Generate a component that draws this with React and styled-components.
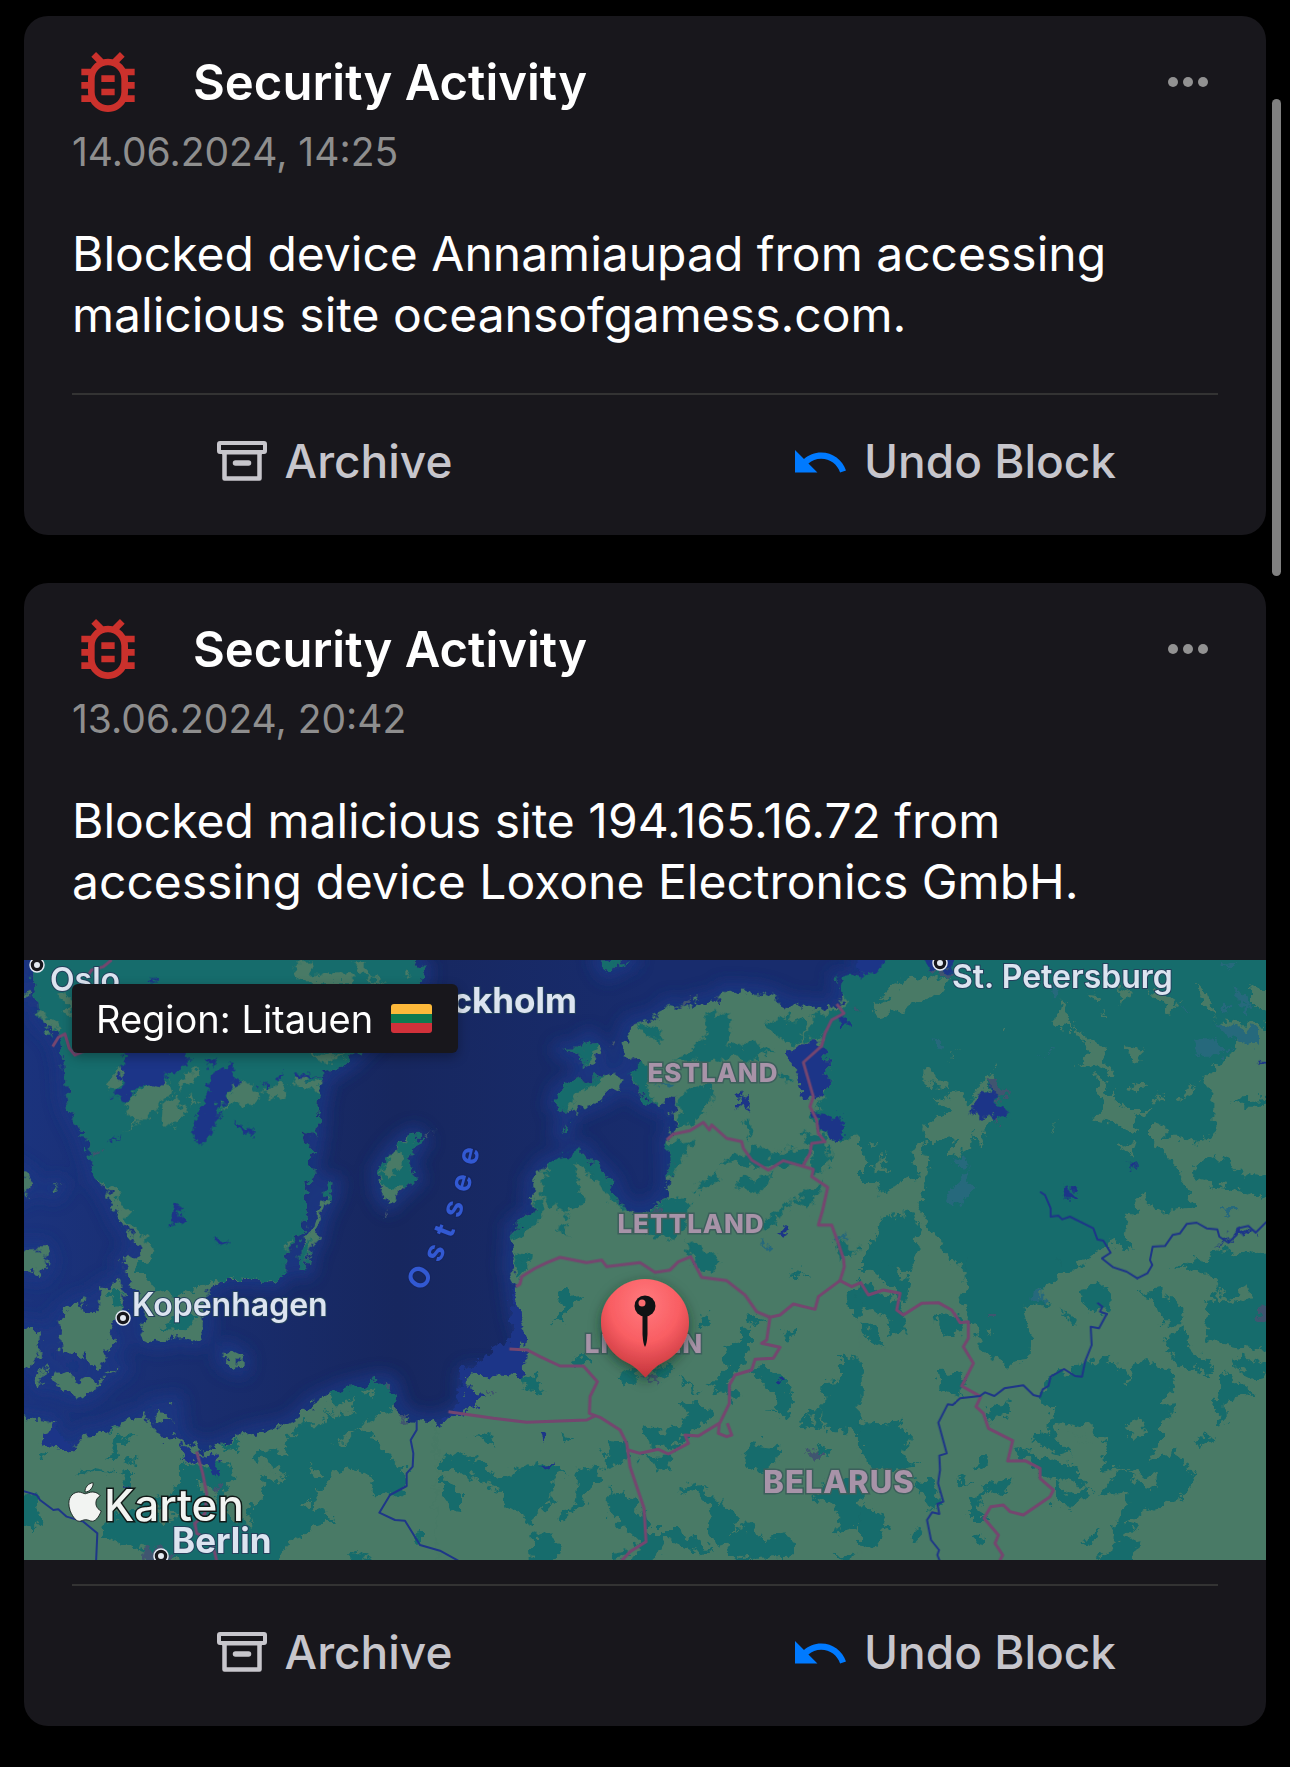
import React from 'react';
import styled, { createGlobalStyle } from 'styled-components';
import { FaApple } from 'react-icons/fa';

const GlobalStyle = createGlobalStyle`
  * {
    box-sizing: border-box;
  }

  body {
    margin: 0;
    background: #000000;
    color: #ffffff;
    font-family: Inter, 'Liberation Sans', sans-serif;
  }
`;

const Page = styled.main`
  position: relative;
  display: flex;
  flex-direction: column;
  gap: 48px;
  padding: 16px 24px 40px;
`;

const ScrollThumb = styled.div`
  position: absolute;
  top: 99px;
  right: 9px;
  width: 9px;
  height: 477px;
  border-radius: 5px;
  background: #808080;
`;

const Card = styled.article`
  padding: 36px 0 8px;
  border-radius: 24px;
  background: #18171c;
  overflow: hidden;
`;

const CardHeader = styled.header`
  display: flex;
  align-items: center;
  height: 60px;
  padding: 0 48px 0 57px;
`;

const Title = styled.h2`
  flex: 1;
  margin: 0 0 0 58px;
  font-size: 49px;
  font-weight: 600;
  line-height: 61px;
`;

const MoreButton = styled.button`
  display: flex;
  padding: 10px;
  border: none;
  background: none;
  cursor: pointer;
`;

const DateText = styled.time`
  display: block;
  margin: 16px 48px 0;
  color: #8e8e8e;
  font-size: 39px;
  line-height: 48px;
`;

const Message = styled.p`
  margin: 47px 48px 48px;
  font-size: 48px;
  line-height: 61px;
`;

const Actions = styled.footer`
  display: grid;
  grid-template-columns: 1fr 1fr;
  column-gap: 96px;
  place-items: center;
  height: 134px;
  margin: ${({ $spaced }) => ($spaced ? '24px' : '0')} 48px 0;
  border-top: 2px solid #333333;
`;

const ActionButton = styled.button`
  display: flex;
  align-items: center;
  gap: 18px;
  padding: 0;
  border: none;
  background: none;
  color: #c7c6cc;
  font-family: inherit;
  font-size: 46px;
  font-weight: 500;
  line-height: 60px;
  cursor: pointer;
`;

const MapWrapper = styled.div`
  position: relative;
  height: 600px;
  overflow: hidden;
`;

const MapSvg = styled.svg`
  display: block;
  width: 100%;
  height: 100%;
`;

const RegionTag = styled.div`
  position: absolute;
  top: 24px;
  left: 48px;
  display: flex;
  align-items: center;
  gap: 18px;
  height: 69px;
  padding: 0 26px 0 24px;
  border-radius: 6px;
  background: #18171c;
  box-shadow: 0 4px 12px rgba(0, 0, 0, 0.3);
  font-size: 38px;
  line-height: 48px;
`;

const Flag = styled.span`
  width: 41px;
  height: 29px;
  border-radius: 3px;
  background: linear-gradient(
    #fdb93a 0 33%,
    #0f7a50 33% 66%,
    #d0313a 66% 100%
  );
`;

const PlaceText = styled.text`
  fill: #dce4f0;
  stroke: #24405c;
  stroke-width: 2px;
  paint-order: stroke;
  font-size: ${({ $large }) => ($large ? '35px' : '32px')};
  font-weight: ${({ $large }) => ($large ? 700 : 600)};
`;

const CountryText = styled.text`
  fill: #a893a8;
  stroke: #3d5f5c;
  stroke-width: 3px;
  paint-order: stroke;
  font-size: ${({ $large }) => ($large ? '31px' : '26px')};
  font-weight: 800;
  letter-spacing: 1px;
`;

const SeaText = styled.text`
  fill: #3259d2;
  stroke: #16255e;
  stroke-width: 2px;
  paint-order: stroke;
  font-size: 29px;
  font-weight: 700;
  letter-spacing: 11px;
`;

const BrandText = styled.text`
  fill: #f2f4f2;
  stroke: #111a18;
  stroke-width: 3px;
  paint-order: stroke;
  font-size: 44px;
  font-weight: 500;
`;

// the map is split in six sheets, three units per pixel
const sheets = [
  {
    x: -12,
    y: -30,
    land: [
      '345,960 320,920 350,915 365,900 330,850 300,810 280,765 255,715 230,690 220,650 200,590 190,560 150,480 140,440 135,350 125,300 100,240 75,230 55,200 50,150 40,90 38,-20 1180,-20 1190,40 1210,60 1200,100 1120,200 1020,300 990,330 930,370 890,380 905,415 895,460 890,560 860,545 850,570 885,600 865,640 880,680 850,720 860,760 850,840 830,870 795,915 795,960',
      '-40,120 30,130 36,140 -40,145', '-40,640 28,680 28,720 -40,750', '-40,897 70,897 82,930 75,960 -40,960', '88,715 118,705 100,728',
      '1185,555 1205,575 1170,610 1170,660 1187,685 1150,715 1105,760 1085,730 1078,660 1120,600 1160,565',
      '920,705 940,700 930,745 900,800 885,870 865,910 858,960 845,960 842,890 870,830 890,790 915,745',
    ],
    forest: [
      '345,970 370,925 398,925 390,880 360,850 325,820 325,790 300,760 280,715 230,690 220,650 200,590 190,560 150,480 140,440 135,350 125,300 100,240 75,230 55,200 50,150 40,90 38,-20 1180,-20 1190,40 1210,60 1200,100 1120,200 1020,300 990,330 930,370 890,380 905,415 895,460 890,560 860,545 850,570 885,600 865,640 880,680 850,720 860,760 850,840 830,870 795,915 795,970',
      '1185,555 1205,575 1170,610 1170,660 1187,685 1150,715 1090,715 1078,660 1120,600',
      '920,705 940,700 930,745 915,745', '842,890 865,870 858,960 845,960',
    ],
    meadow: [
      '315,450 385,405 390,365 400,400 440,385 455,430 415,470 360,520 310,550 345,515 330,490',
      '255,415 295,350 318,380 290,420', '470,400 530,350 530,380 480,418', '600,470 650,400 680,390 725,430 700,465 640,460',
      '725,430 785,390 798,430 770,450', '810,400 840,375 905,400 900,420 850,415', '430,470 460,445 495,490 470,525 427,520',
      '500,430 530,435 510,470', '820,35 880,35 885,75 1000,70 1000,100 840,100', '990,40 1040,40 1040,80 1100,100 1050,95',
      '50,180 80,200 120,225 100,240 70,225', '105,130 155,120 155,195 130,160', '875,310 920,315 990,310 900,340',
      '1085,670 1130,590 1150,625 1120,685', '1145,70 1170,55 1165,80', '800,880 820,865 805,900',
    ],
    lake: [
      '320,300 515,300 500,345 450,370 420,405 390,400 350,415 320,445 272,440 310,410 300,350',
      '640,335 650,400 600,460 600,500 550,585 525,570 540,470 580,370', '455,800 475,765 488,775 475,830 452,825',
      '592,868 632,875 600,885', '640,515 700,540 700,560 660,535', '560,330 585,330 580,355', '765,375 795,370 785,390',
      '820,370 900,380 820,388', '720,410 750,405 735,425', '275,570 305,550 285,575', '388,70 412,105 395,100',
    ],
    marsh: [],
    town: ['215,610 240,602 225,625', '1210,560 1250,540 1215,570', '1088,800 1112,775 1100,798'],
    border: ['275,30 250,50 215,60 205,75', '98,290 115,262 135,252 148,295 165,315 200,300'],
    river: [],
  },
  {
    x: 1248,
    y: -30,
    land: [
      '570,225 650,205 690,165 740,180 775,155 840,155 850,125 960,130 1010,145 1030,165 1110,170 1185,178 1210,130 1195,85 1215,110 1245,100 1262,70 1262,960 215,960 220,830 275,790 280,690 320,640 370,630 430,600 440,625 510,690 530,750 575,790 620,785 680,745 690,700 685,570 700,540 700,490 715,455 690,440 655,468 600,440 575,380 600,340 560,320 555,270',
      '365,300 420,300 445,265 490,310 430,358 425,320', '345,465 360,420 420,390 500,375 530,370 545,400 500,440 440,465 390,487',
      '360,550 380,520 375,550', '480,32 570,32 500,65',
    ],
    forest: [
      '800,190 870,190 860,290 940,280 1000,300 940,330 880,320 800,340 700,330 770,290 800,240', '960,225 1010,200 1090,210 1095,265 1040,280 1000,250',
      '1110,190 1190,190 1140,270 1100,280', '575,370 600,340 640,350 620,400 625,440 655,468 600,440', '720,430 820,390 810,460 760,520 700,540 720,470',
      '1145,270 1180,200 1215,160 1195,85 1262,70 1262,550 1200,580 1140,540 1110,500 1165,430 1160,330',
      '320,640 430,600 440,625 510,690 530,750 575,790 500,740 440,660 405,640 415,700 435,755 380,795 305,740',
      '220,830 275,790 290,740 310,750 300,810 260,850 220,870', '355,830 385,815 380,865', '685,580 775,565 740,600 710,650 690,690',
      '620,790 690,740 750,760 750,800 700,870 610,850 580,820', '740,870 830,910 838,960 760,940', '760,720 830,665 825,695 780,730',
      '890,690 995,675 960,730 900,720', '840,640 900,615 960,590 1000,620 1040,590 1110,610 1080,645 980,655 880,640',
      '960,820 1090,730 1150,700 1100,790 1060,750 980,850', '1080,545 1160,560 1165,640 1120,680 1120,600', '905,520 935,510 930,570',
      '1185,880 1250,890 1240,930 1200,920', '225,910 270,915 260,960 220,950', '1020,380 1060,380 1040,405', '590,220 660,240 670,270 620,260',
      '365,300 420,300 445,265 470,290 430,358 425,320', '345,465 360,420 420,390 500,375 430,420 400,440 390,487', '360,550 380,520 375,550', '480,32 570,32 500,65',
    ],
    meadow: [],
    lake: [
      '1045,300 1075,282 1150,282 1160,330 1165,420 1120,450 1080,440 1070,370 1040,330', '1115,480 1190,495 1212,530 1210,568 1180,568 1130,520',
      '900,435 925,432 930,475 915,488 895,465', '1010,850 1038,828 1040,852', '1195,200 1220,200 1215,230',
    ],
    marsh: ['960,875 990,885 985,905', '1190,870 1220,845 1210,880', '650,400 700,395 690,415'],
    town: ['715,165 755,145 735,185', '510,280 540,270 525,290', '625,780 660,775 665,795', '1240,175 1262,180 1250,190'],
    border: [
      '680,570 700,552 750,542 790,517 808,540 815,525 860,565 905,575 910,595 935,630 985,660 1030,632 1085,648 1120,658 1115,680 1163,712 1148,780 1135,825 1175,825 1195,880 1210,925 1213,950 1200,992',
      '1190,162 1212,190 1175,210 1155,250 1145,288 1090,337 1120,440 1110,470 1130,510 1135,550 1155,575 1115,580 1110,610 1088,648',
      '228,1010 240,1002 245,980 285,955 320,938 360,922 440,938 485,930 500,950 600,938 645,967 690,960 715,935 752,920 785,982 860,992 915,1035 950,1085 990,1102',
    ],
    river: [],
  },
  {
    x: 2508,
    y: -30,
    land: ['0,-20 1290,-20 1290,960 0,960'],
    forest: ['0,-20 1290,-20 1290,960 0,960'],
    meadow: [
      '30,150 60,165 110,100 190,80 280,85 240,130 160,165 75,200 40,180',
      '585,230 600,145 625,180 630,220 690,270 740,290 735,340 765,370 745,385 720,340 650,350 690,310 670,270 640,235',
      '705,380 740,400 775,465 810,480 880,480 830,500 820,550 750,520 690,510 735,470',
      '1000,90 1040,130 1070,210 1280,230 1280,440 1110,450 1150,470 1280,470 1280,690 1150,670 1090,620 1000,640 1000,690 1130,720 1280,760 1280,900 1140,910 1080,900 940,960 870,960 800,860 810,800 850,730 890,790 1000,770 955,660 870,570 870,520 910,520 910,560 960,560 1000,580 1060,560 1060,440 1020,390 1110,310 1130,250 1060,200 1020,130',
      '230,445 290,430 330,460 375,400 395,500 370,560 355,610 340,540 325,600 265,625 290,570 210,580 190,560 200,520 270,485',
      '0,690 50,690 60,740 130,690 180,680 150,600 190,575 208,650 180,760 200,820 235,870 260,910 310,960 150,960 180,860 160,790 70,800 50,860 0,920',
      '30,660 80,610 70,650 100,670', '265,325 305,300 280,318', '800,285 855,305 820,335', '955,460 1000,390 985,440', '830,390 850,405 830,425 815,405',
      '560,550 590,520 575,540', '880,460 910,425 905,460', '860,120 960,150 930,190 890,150', '680,125 720,130 710,155', '770,130 805,110 795,155',
      '190,350 225,375 270,420 240,410 190,400', '1170,115 1280,120 1280,180 1170,170', '770,590 830,570 820,620', '640,960 750,880 830,900 870,960',
      '0,610 20,630 0,650', '20,580 55,580 40,598', '420,232 440,235 430,252', '410,350 400,380 350,430 330,450 375,385', '725,175 745,205 730,200',
    ],
    lake: [
      '-10,-10 75,-10 75,30 60,75 0,75', '165,-10 275,-10 280,60 220,60', '330,475 385,415 410,440 430,470 440,500 400,505 355,500', '807,635 830,635 825,655 808,650',
      '607,710 637,707 643,745 615,745', '1190,335 1260,350 1260,390', '1060,893 1105,878 1130,840 1165,825 1187,848 1160,840',
    ],
    marsh: [
      '540,325 590,280 570,305', '1000,270 1060,265 1110,300 1080,320 1020,320', '1060,215 1200,240 1200,290 1120,270', '260,740 320,660 340,715 300,765',
      '275,635 310,612 330,660', '1085,30 1135,40 1110,60', '1080,160 1110,190 1090,200', '1120,110 1160,140 1165,190 1145,170', '1080,780 1130,770 1100,800',
      '225,265 250,290 240,310', '570,110 600,120 580,155', '960,155 995,185 975,180',
    ],
    town: ['375,390 405,385 435,430 430,450 390,430', '400,480 425,485 415,530', '220,60 280,60 270,80 230,75'],
    border: [],
    river: [
      '540,725 555,735 572,775 572,800 595,797 607,808 630,800 700,835 712,868 730,872 752,908 726,925 760,952 800,965 832,985 862,970 877,945 870,930 878,890 915,888 938,855 960,850 980,822 1010,818 1040,835 1072,838 1078,860 1105,878 1130,855 1132,835 1165,828 1187,848 1230,805',
    ],
  },
  {
    x: -12,
    y: 900,
    land: [
      '310,0 790,0 785,40 770,65 700,60 600,60 580,80 550,130 555,200 535,240 470,230 420,245 370,235 362,200 380,150 350,90 310,40',
      '240,90 280,70 310,75 310,130 290,170 260,215 300,250 250,280 250,310 235,330 205,310 200,285 130,280 115,170 170,130 185,120 190,150 215,160 240,140',
      '100,350 120,340 175,365 210,345 250,360 220,395 170,410 110,385', '-40,200 50,205 65,230 60,290 25,320 -40,315', '45,360 80,315 60,385',
      '255,340 305,325 260,350', '-40,0 80,0 55,45 30,35 -40,20', '612,268 640,280 662,290 662,325 615,305', '405,490 400,435 430,470 470,475', '440,435 465,425 450,445',
      '-40,460 50,480 100,485 105,520 60,550 110,560 165,575 185,525 250,515 325,480 375,465 430,540 475,530 520,560 550,575 600,560 680,525 800,500 835,475 880,430 970,390 1075,365 1110,370 1130,440 1160,480 1262,490 1262,950 -40,950',
    ],
    forest: [
      '350,0 790,0 785,40 770,62 640,55 590,60 520,90 470,110 400,85 380,40', '270,90 305,90 300,150 280,130', '410,200 500,160 545,170 500,205',
      '480,600 560,630 620,600 650,650 600,720 640,780 700,800 680,740 740,720 720,660 800,640 730,600 700,590 720,565 800,580 790,550 850,490 920,490 925,450 990,470 1020,430 1130,420 1120,450 1000,500 1050,520 1120,600 1160,640 1150,700 1060,700 1040,640 980,620 900,680 880,740 940,780 880,800 800,860 760,940 600,940 380,870 240,830 250,790 400,720 480,680',
      '920,410 970,390 1075,365 1110,370 1130,440 1020,440 960,460', '-30,710 55,700 60,790 35,820 -30,760', '265,600 290,540 345,525 300,560 275,600', '315,595 350,600 325,612',
      '155,640 205,628 330,640 330,680 300,640', '50,580 80,580 60,600', '980,910 1010,880 1070,910', '1170,820 1200,810 1200,850', '250,520 295,500 270,522', '590,565 670,540 650,570',
    ],
    meadow: [
      '730,620 800,650 780,670 720,640', '865,610 905,640 880,655', '940,550 1010,515 990,545', '845,730 870,720 870,750', '925,455 1000,410 990,450 940,475',
      '1030,390 1065,385 1050,405', '530,660 600,690 580,740 540,700', '400,740 480,760 420,800',
    ],
    lake: ['480,545 520,575 600,590 595,650 560,615 490,600', '320,670 340,690 325,700', '60,550 100,485 110,520 165,560 150,575'],
    marsh: [],
    town: ['580,670 605,665 595,700', '370,880 420,855 470,885 440,920 365,920', '1080,365 1112,370 1105,385', '1130,450 1170,470 1140,482'],
    border: ['530,575 548,640 560,700 555,760 525,790 530,820 575,840 592,910'],
    river: [
      '0,690 50,705 60,720 100,750 115,748 140,770 190,785 232,820 228,910',
      '1190,480 1190,510 1172,540 1180,580 1178,620 1160,640 1160,678 1110,705 1078,758 1125,780 1155,782 1200,855 1260,872 1320,905',
    ],
  },
  {
    x: 1248,
    y: 900,
    land: ['215,0 225,100 235,170 257,240 250,290 250,352 170,345 80,342 78,398 140,402 100,430 50,460 12,485 -10,490 -10,950 1262,950 1262,0'],
    forest: [
      '365,90 385,90 395,110 425,105 380,155 370,190 330,185 360,150', '245,350 290,350 310,395 255,390', '395,300 425,280 455,310 400,315', '530,340 590,325 590,370 560,390',
      '635,330 690,310 695,350 650,360', '725,350 785,400 770,400 735,375', '775,175 800,155 815,180 790,200',
      '900,210 930,200 930,260 905,320 880,340 860,370 900,400 880,420 810,380 860,330 850,265 900,250', '925,165 985,180 930,195', '1025,225 1050,205 1065,235 1040,250',
      '1050,35 1075,25 1100,55', '720,425 810,440 820,470 770,490 740,530 690,570 620,560 610,510 640,495 650,515 710,500 750,465', '495,545 555,550 570,590 530,620 490,630',
      '600,590 700,590 690,640', '920,335 980,325 1040,360 1070,425 1020,470 990,390 960,350', '980,450 1060,460 1040,480', '1150,370 1200,365 1200,290 1262,300 1262,520 1150,510',
      '1205,110 1262,70 1262,190', '1080,490 1110,450 1150,440 1140,510', '905,595 925,545 1015,560 1010,620 940,640',
      '705,690 780,665 830,720 900,775 870,820 940,785 970,850 1020,815 1060,840 1050,890 900,895 830,850 800,810 820,760 780,700',
      '620,810 720,810 830,880 760,870 680,830 660,880 600,940 560,940 600,850 500,750 510,690 560,700 610,760',
      '0,600 60,580 110,600 170,650 300,600 380,640 340,660 340,720 270,785 200,740 160,680 60,630 0,640', '0,650 60,700 60,760 30,755 0,680',
      '420,630 480,620 490,660 440,690 420,740 370,790 355,770 410,730', '275,830 320,815 365,860 360,895 280,940', '1180,660 1262,640 1262,800 1190,820 1200,760 1120,710',
      '85,520 150,535 160,560', '360,520 395,530 370,545', '750,0 835,0 820,35 780,30', '225,0 270,10 235,50', '1130,560 1180,570 1150,600', '500,880 560,870 530,905', '1180,885 1240,880 1230,905',
    ],
    meadow: ['1100,470 1125,465 1120,490'],
    lake: [
      '222,60 210,240 60,335 50,440 0,490 100,440 140,402 78,398 80,342 250,352 257,240', '300,520 325,525 312,550', '295,615 340,605 310,628', '1005,353 1027,357 1020,373',
    ],
    marsh: [],
    town: ['600,345 655,350 655,380 625,360', '1095,567 1140,575 1140,597 1115,592', '140,385 160,390 155,408'],
    border: [
      '990,172 1020,165 1060,132 1125,148 1135,110 1200,62 1235,80 1262,68 1285,105 1330,90 1380,100 1370,150 1390,165 1445,130 1495,128 1535,150 1560,188 1585,185 1585,235 1570,260 1600,310 1565,378 1622,410 1608,440 1630,460 1645,505 1718,542 1703,603 1755,602 1800,625 1800,655 1840,690 1830,710 1750,765 1710,755 1690,735 1652,740 1632,775 1675,825 1665,850 1688,885 1675,910',
      '990,172 980,240 965,250 1020,262 1000,295 945,298 935,330 885,345 868,375 868,430 840,488 775,528 735,525 745,550 685,582 655,568 600,580 565,570',
      '838,488 835,520 860,530 875,525 862,490', '208,267 262,270 300,290 360,318 430,318 472,365 450,410 448,460 480,472 540,510 560,550 570,620 612,745 618,845 570,875 538,910',
      '25,455 160,475 260,487 440,480 465,468',
    ],
    river: [],
  },
  {
    x: 2508,
    y: 900,
    land: ['0,0 1290,0 1290,950 0,950'],
    forest: [
      '320,0 600,0 590,60 520,100 570,130 490,140 510,200 500,300 430,310 370,280 340,200 300,120 320,90', '0,60 60,100 120,120 140,220 90,230 80,170 0,140',
      '10,190 60,210 70,265 20,240', '230,165 300,170 310,210 240,225', '230,340 300,335 320,370 290,410 240,390', '380,450 450,430 440,470 390,475', '0,0 70,0 150,60 140,130 60,60',
      '670,80 745,75 740,160 680,150 650,100', '600,155 650,175 640,200', '830,100 900,90 970,150 970,190 910,190 880,120',
      '920,0 1280,0 1280,270 1140,260 1040,240 1045,130 1080,60 960,15',
      '570,350 740,285 760,320 790,320 800,370 830,300 930,320 940,390 900,430 900,550 850,620 720,630 740,550 690,500 600,490 580,530 640,590 580,570 510,545 560,510 590,440 540,430 560,370',
      '910,240 970,200 980,260 1050,300 1060,350 1000,330 950,310', '1060,440 1090,330 1140,370 1190,400 1100,420 1100,480 1070,490', '1120,290 1180,300 1260,330 1180,355 1130,330',
      '1000,550 1040,515 1060,545 1010,565', '900,440 950,435 900,500', '460,560 560,590 640,620 680,680 540,640', '585,650 610,700 700,685 640,740 585,735',
      '720,700 770,640 870,600 950,575 1010,655 960,720 850,760 790,790 830,800 790,830 830,840 810,940 700,910 780,850 755,800 800,740 810,700',
      '335,620 380,580 380,610 340,635', '290,650 340,670 300,665', '400,670 460,650 440,690 370,700 350,740 380,780 330,780 320,755 345,700', '335,830 360,810 375,840 355,855',
      '670,845 720,805 715,840 690,850', '155,835 170,805 195,820 170,845', '160,660 220,665 240,740 210,750', '0,740 50,750 80,800 60,860 0,850', '50,490 110,485 150,530 130,590 170,620 60,630 0,590 0,480',
    ],
    meadow: ['790,640 850,640 890,650 890,690 830,670', '1065,90 1110,120 1165,75 1175,110 1120,130 1075,125', '620,520 680,530 700,560', '800,500 840,470 860,500 820,540', '380,200 400,210 385,240'],
    lake: [],
    marsh: ['500,105 550,85 550,130 520,120'],
    town: ['1190,160 1250,120 1250,190 1195,185', '385,180 405,165 405,180'],
    border: [],
    river: [
      '712,128 727,140 720,155 740,162 717,205 692,200 695,255 675,305 666,350 645,348 612,327 572,350 565,378 548,388 540,410 520,405 490,376 433,385 403,408 375,397 360,408 300,415 278,435 263,433 235,488 260,580 238,587 240,630 234,670 250,725 232,732 238,762 216,757 201,780 213,840 237,870 232,885 242,910',
    ],
  },
];

const places = [
  { name: 'Oslo', x: 26, y: 31, dotX: 13, dotY: 5 },
  { name: 'St. Petersburg', x: 928, y: 28, dotX: 916, dotY: 3 },
  { name: 'Kopenhagen', x: 108, y: 356, dotX: 99, dotY: 358 },
  { name: 'Berlin', x: 148, y: 593, dotX: 137, dotY: 596, large: true },
];

const countries = [
  { name: 'ESTLAND', x: 689, y: 122 },
  { name: 'LETTLAND', x: 667, y: 273 },
  { name: 'LITAUEN', x: 620, y: 393 },
  { name: 'BELARUS', x: 815, y: 533, large: true },
];

const closedPath = (areas) => areas.map((points) => `M${points}Z`).join('');
const openPath = (lines) => lines.map((points) => `M${points}`).join('');

function Terrain({ kind, open, ...props }) {
  return (
    <g {...props}>
      {sheets.map((sheet) => (
        <path
          key={`${sheet.x}/${sheet.y}`}
          transform={`translate(${sheet.x} ${sheet.y})`}
          d={open ? openPath(sheet[kind]) : closedPath(sheet[kind])}
        />
      ))}
    </g>
  );
}

function BugIcon() {
  return (
    <svg width="54" height="60" viewBox="4 3 16 18" fill="#cb312c" aria-hidden="true">
      <path d="M20 8h-2.81a5.985 5.985 0 0 0-1.82-1.96L17 4.41 15.59 3l-2.17 2.17C12.96 5.06 12.49 5 12 5s-.96.06-1.41.17L8.41 3 7 4.41l1.62 1.63C7.88 6.55 7.26 7.22 6.81 8H4v2h2.09c-.05.33-.09.66-.09 1v1H4v2h2v1c0 .34.04.67.09 1H4v2h2.81c1.04 1.79 2.97 3 5.19 3s4.15-1.21 5.19-3H20v-2h-2.09c.05-.33.09-.66.09-1v-1h2v-2h-2v-1c0-.34-.04-.67-.09-1H20V8zm-4 7c0 2.2-1.8 4-4 4s-4-1.8-4-4v-4c0-2.2 1.8-4 4-4s4 1.8 4 4v4zm-6-1h4v2h-4v-2zm0-4h4v2h-4v-2z" />
    </svg>
  );
}

function MoreIcon() {
  return (
    <svg width="40" height="10" viewBox="0 0 40 10" fill="#929292" aria-hidden="true">
      <circle cx="5" cy="5" r="5" />
      <circle cx="20" cy="5" r="5" />
      <circle cx="35" cy="5" r="5" />
    </svg>
  );
}

function ArchiveIcon() {
  return (
    <svg width="50" height="40" viewBox="0 0 50 40" fill="none" stroke="currentColor" strokeWidth="4" aria-hidden="true">
      <rect x="2" y="2" width="46" height="9" rx="1" />
      <path d="M7.5 11v26.5h35V11" strokeWidth="4.5" strokeLinejoin="round" />
      <path d="M5 12h40" strokeWidth="3" />
      <path d="M18.5 22h13" strokeWidth="5.5" strokeLinecap="round" />
    </svg>
  );
}

function UndoIcon() {
  return (
    <svg width="51" height="23" viewBox="2 7 20.47 9.22" fill="#007aff" aria-hidden="true">
      <path d="M12.5 8c-2.65 0-5.05.99-6.9 2.6L2 7v9h9l-3.62-3.62c1.39-1.16 3.16-1.88 5.12-1.88 3.54 0 6.55 2.31 7.6 5.5l2.37-.78C21.08 11.03 17.15 8 12.5 8z" />
    </svg>
  );
}

function RegionMap({ region }) {
  return (
    <MapWrapper>
      <MapSvg viewBox="0 0 1242 600" preserveAspectRatio="xMidYMid slice" role="img" aria-label={region}>
        <defs>
          <filter id="rough" filterUnits="userSpaceOnUse" x="-60" y="-60" width="3900" height="1950">
            <feTurbulence type="fractalNoise" baseFrequency="0.034" numOctaves="4" seed="4" />
            <feDisplacementMap in="SourceGraphic" scale="54" xChannelSelector="R" yChannelSelector="G" />
          </filter>
          <filter id="coast" filterUnits="userSpaceOnUse" x="-60" y="-60" width="3900" height="1950">
            <feGaussianBlur stdDeviation="22" />
          </filter>
          <filter id="pinShadow" x="-40%" y="-40%" width="180%" height="180%">
            <feDropShadow dx="0" dy="4" stdDeviation="6" floodColor="#0b2a22" floodOpacity="0.6" />
          </filter>
          <linearGradient id="sea" x1="0" y1="0" x2="1" y2="0">
            <stop offset="0" stopColor="#1b337d" />
            <stop offset="0.3" stopColor="#17275f" />
            <stop offset="0.5" stopColor="#182c6d" />
          </linearGradient>
          <radialGradient id="pin" cx="0.5" cy="0.25" r="0.78">
            <stop offset="0" stopColor="#ff7a7e" />
            <stop offset="0.5" stopColor="#f95e63" />
            <stop offset="1" stopColor="#be3037" />
          </radialGradient>
          <path id="seaCurve" d="M398 332Q440 272 460 170" />
        </defs>
        <rect width="1242" height="600" fill="url(#sea)" />
        <g transform="scale(0.333333)">
          <Terrain
            kind="land"
            fill="none"
            stroke="#1e3984"
            strokeWidth="56"
            strokeLinejoin="round"
            opacity="0.85"
            filter="url(#coast)"
          />
          <g filter="url(#rough)">
            <Terrain kind="land" fill="#487a66" />
            <Terrain kind="forest" fill="#156c6c" />
            <Terrain kind="meadow" fill="#487a66" />
            <Terrain kind="marsh" fill="#27697c" />
            <Terrain kind="town" fill="#40556f" />
            <Terrain kind="lake" fill="#1e3688" />
          </g>
          <Terrain kind="border" open fill="none" stroke="#75466f" strokeWidth="9" strokeLinejoin="round" />
          <Terrain kind="river" open fill="none" stroke="#1e3688" strokeWidth="6" strokeLinejoin="round" />
        </g>
        <SeaText>
          <textPath href="#seaCurve">Ostsee</textPath>
        </SeaText>
        {places.map((place) => (
          <g key={place.name}>
            <circle cx={place.dotX} cy={place.dotY} r="5" fill="#e4eaf2" stroke="#17171c" strokeWidth="4" />
            <circle cx={place.dotX} cy={place.dotY} r="7" fill="none" stroke="#e4eaf2" strokeWidth="1.5" />
            <PlaceText x={place.x} y={place.y} $large={place.large}>
              {place.name}
            </PlaceText>
          </g>
        ))}
        <PlaceText x="553" y="53" textAnchor="end" $large>
          Stockholm
        </PlaceText>
        {countries.map((country) => (
          <CountryText key={country.name} x={country.x} y={country.y} textAnchor="middle" $large={country.large}>
            {country.name}
          </CountryText>
        ))}
        <g filter="url(#pinShadow)">
          <path
            d="M621 319C645 319 665 339 665 362C665 381 653 396 638 403C630 407 626 413 621.5 417.5C617 413 612 407 604 403C589 396 577 381 577 362C577 339 597 319 621 319Z"
            fill="url(#pin)"
          />
        </g>
        <path d="M618.5 350h5v24q-.5 10-2.5 13q-2-3-2.5-13z" fill="#101214" />
        <circle cx="621" cy="346" r="10.5" fill="#101214" />
        <circle cx="618" cy="343" r="3.5" fill="#f96d70" />
        <FaApple x="39" y="520" size="44" fill="#f2f4f2" stroke="#111a18" strokeWidth="10" />
        <BrandText x="80" y="561">
          Karten
        </BrandText>
      </MapSvg>
      <RegionTag>
        {region}
        <Flag />
      </RegionTag>
    </MapWrapper>
  );
}

function ActivityCard({ date, message, region }) {
  return (
    <Card>
      <CardHeader>
        <BugIcon />
        <Title>Security Activity</Title>
        <MoreButton type="button" aria-label="More">
          <MoreIcon />
        </MoreButton>
      </CardHeader>
      <DateText>{date}</DateText>
      <Message>{message}</Message>
      {region && <RegionMap region={region} />}
      <Actions $spaced={Boolean(region)}>
        <ActionButton type="button">
          <ArchiveIcon />
          Archive
        </ActionButton>
        <ActionButton type="button">
          <UndoIcon />
          Undo Block
        </ActionButton>
      </Actions>
    </Card>
  );
}

export default function App() {
  return (
    <>
      <GlobalStyle />
      <Page>
        <ActivityCard
          date="14.06.2024, 14:25"
          message="Blocked device Annamiaupad from accessing malicious site oceansofgamess.com."
        />
        <ActivityCard
          date="13.06.2024, 20:42"
          message="Blocked malicious site 194.165.16.72 from accessing device Loxone Electronics GmbH."
          region="Region: Litauen"
        />
        <ScrollThumb />
      </Page>
    </>
  );
}
